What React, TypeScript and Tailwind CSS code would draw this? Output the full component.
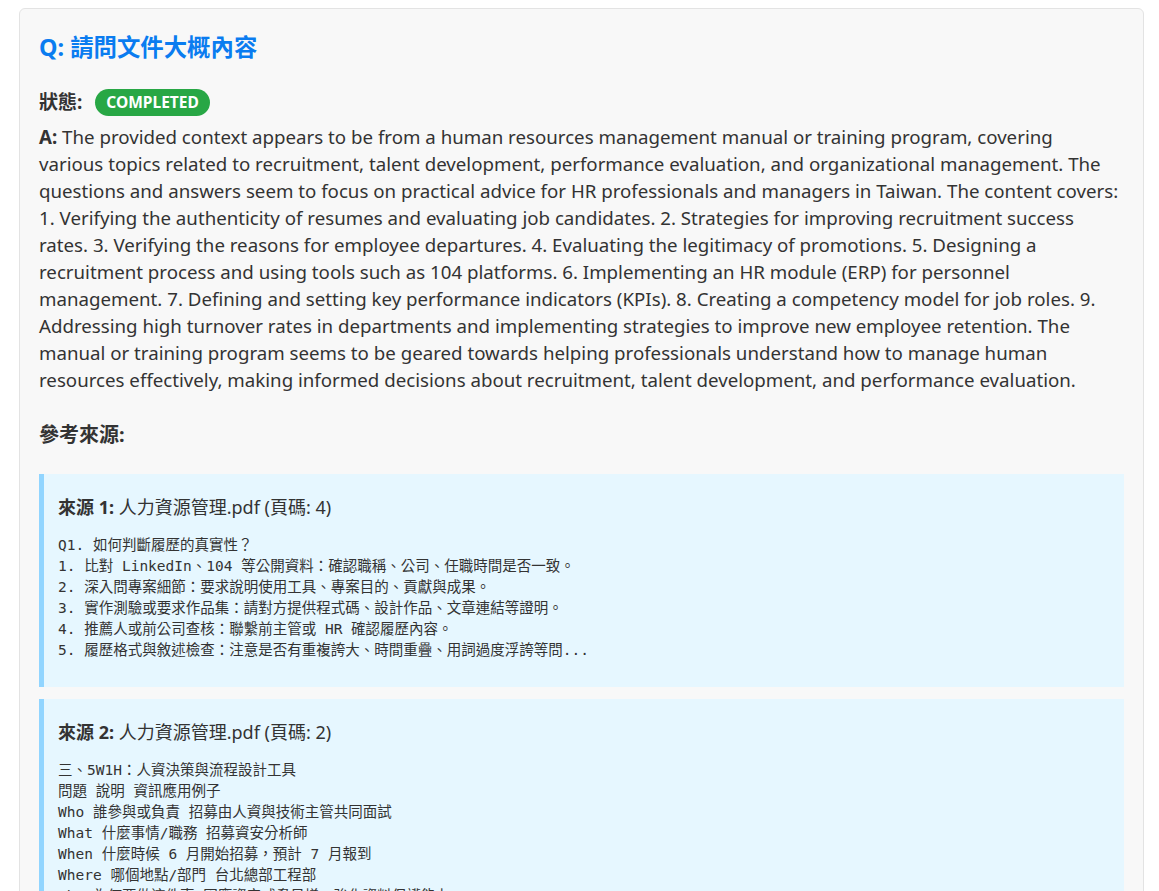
import React from "react";

const sans = '"Noto Sans", "Noto Sans CJK TC", sans-serif';
const mono = '"DejaVu Sans Mono", "Noto Sans CJK TC", monospace';

const answerLines = [
  "The provided context appears to be from a human resources management manual or training program, covering",
  "various topics related to recruitment, talent development, performance evaluation, and organizational management. The",
  "questions and answers seem to focus on practical advice for HR professionals and managers in Taiwan. The content covers:",
  "1. Verifying the authenticity of resumes and evaluating job candidates. 2. Strategies for improving recruitment success",
  "rates. 3. Verifying the reasons for employee departures. 4. Evaluating the legitimacy of promotions. 5. Designing a",
  "recruitment process and using tools such as 104 platforms. 6. Implementing an HR module (ERP) for personnel",
  "management. 7. Defining and setting key performance indicators (KPIs). 8. Creating a competency model for job roles. 9.",
  "Addressing high turnover rates in departments and implementing strategies to improve new employee retention. The",
  "manual or training program seems to be geared towards helping professionals understand how to manage human",
  "resources effectively, making informed decisions about recruitment, talent development, and performance evaluation.",
];

const sources = [
  {
    n: 1,
    page: 4,
    text: `Q1. 如何判斷履歷的真實性？
1. 比對 LinkedIn、104 等公開資料：確認職稱、公司、任職時間是否一致。
2. 深入問專案細節：要求說明使用工具、專案目的、貢獻與成果。
3. 實作測驗或要求作品集：請對方提供程式碼、設計作品、文章連結等證明。
4. 推薦人或前公司查核：聯繫前主管或 HR 確認履歷內容。
5. 履歷格式與敘述檢查：注意是否有重複誇大、時間重疊、用詞過度浮誇等問...`,
  },
  {
    n: 2,
    page: 2,
    text: `三、5W1H：人資決策與流程設計工具
問題 說明 資訊應用例子
Who 誰參與或負責 招募由人資與技術主管共同面試
What 什麼事情/職務 招募資安分析師
When 什麼時候 6 月開始招募，預計 7 月報到
Where 哪個地點/部門 台北總部工程部
Why 為何要做這件事 因應資安威脅日增，強化資料保護能力`,
  },
];

export default function App() {
  return (
    <div
      className="min-h-screen bg-white pt-[8px] pl-[19px] pr-[15px] text-[#333]"
      style={{ fontFamily: sans }}
    >
      <div className="rounded-[6px] border border-[#e3e3e3] bg-[#f8f8f8] px-[19px] pt-[24px] pb-[20px]">
        <h2 className="text-[23.4px] font-bold leading-[29px] text-[#0a7cf0]">
          Q: 請問文件大概內容
        </h2>
        <div className="mt-[26px] flex h-[28px] items-center gap-[13px]">
          <span className="text-[19px] font-bold text-[#333]">狀態:</span>
          <span className="flex h-[27px] items-center rounded-full bg-[#28a745] px-[11px] pt-[1px] text-[15.5px] font-bold text-white">
            COMPLETED
          </span>
        </div>
        <p className="mt-[7px] text-[18.7px] leading-[27px] text-[#333]">
          {answerLines.map((line, i) => (
            <span key={i} className="block whitespace-nowrap">
              {i === 0 && <b>A: </b>}
              {line}
            </span>
          ))}
        </p>
        <h4 className="mt-[30px] text-[20px] font-bold leading-[24px] text-[#333]">
          參考來源:
        </h4>
        <div className="mt-[27px] flex flex-col gap-[12px]">
          {sources.map((s) => (
            <div
              key={s.n}
              className="border-l-[5px] border-[#91d5ff] bg-[#e6f7ff] pl-[14px] pr-[14px] pt-[20px] pb-[26px]"
            >
              <div className="text-[18px] leading-[27px] text-[#333]">
                <b>來源 {s.n}:</b> 人力資源管理.pdf (頁碼: {s.page})
              </div>
              <pre
                className="mt-[14px] whitespace-pre-wrap text-[14.5px] leading-[21px] text-[#333]"
                style={{ fontFamily: mono }}
              >
                {s.text}
              </pre>
            </div>
          ))}
        </div>
      </div>
    </div>
  );
}
